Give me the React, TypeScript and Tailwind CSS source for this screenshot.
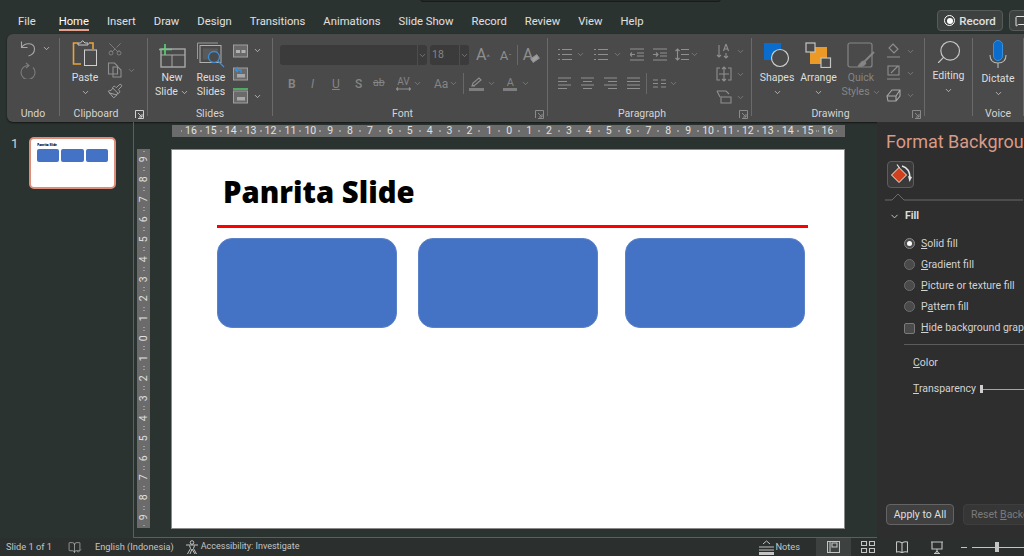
import type { ReactNode } from 'react';
import { ChevronDown, Search, Scissors, Paintbrush, MessageSquare, BookOpen, Check } from 'lucide-react';

const tabs = ['File', 'Home', 'Insert', 'Draw', 'Design', 'Transitions', 'Animations', 'Slide Show', 'Record', 'Review', 'View', 'Help'];
const rulerNumbers = [16, 15, 14, 13, 12, 11, 10, 9, 8, 7, 6, 5, 4, 3, 2, 1, 0, 1, 2, 3, 4, 5, 6, 7, 8, 9, 10, 11, 12, 13, 14, 15, 16];
const sideNumbers = [9, 8, 7, 6, 5, 4, 3, 2, 1, 0, 1, 2, 3, 4, 5, 6, 7, 8, 9];

function Chev({ dim = false, className = '' }: { dim?: boolean; className?: string }) {
  return <ChevronDown size={9} strokeWidth={2} className={`shrink-0 ${dim ? 'text-[#858585]' : 'text-[#d0d0d0]'} ${className}`} />;
}

function Launcher({ dim = false }: { dim?: boolean }) {
  return (
    <svg width="9" height="9" viewBox="0 0 9 9" fill="none" stroke={dim ? '#8a8a8a' : '#d0d0d0'} className="absolute right-[3px] bottom-[3px]">
      <path d="M.5 8V.5H8.500V8.500H3M3 3l4 4M7 4v3H4" />
    </svg>
  );
}

function Group({ label, className, launcher, dim, children }: { label: string; className: string; launcher?: boolean; dim?: boolean; children: ReactNode }) {
  return (
    <div className={`relative h-full shrink-0 flex flex-col ${className}`}>
      <div className="flex-1 min-h-0">{children}</div>
      <div className={`h-[19px] pt-[3px] flex items-center justify-center text-[10.5px] text-[#d4d4d4] ${launcher ? 'pr-[15px]' : ''}`}>{label}</div>
      {launcher && <Launcher dim={dim} />}
    </div>
  );
}

function Sep() {
  return <div className="w-px h-[78px] mt-[4px] bg-[#6a6a6a] shrink-0" />;
}

function Big({ icon, lines, dim, className = '', chevInline, chevBelow }: { icon: ReactNode; lines: string[]; dim?: boolean; className?: string; chevInline?: boolean; chevBelow?: boolean }) {
  return (
    <div className={`flex flex-col items-center text-[10.5px] leading-[14px] ${dim ? 'text-[#858585]' : 'text-[#dedede]'} ${className}`}>
      <div className="h-[28px] flex items-end justify-center">{icon}</div>
      <div className="mt-[3px] flex flex-col items-center whitespace-nowrap">
        {lines.map((l, i) => (
          <div key={l} className="flex items-center gap-[2px]">
            {l}
            {chevInline && i === lines.length - 1 && <Chev dim={dim} />}
          </div>
        ))}
        {chevBelow && <Chev dim={dim} className="mt-[3px]" />}
      </div>
    </div>
  );
}

function Line({ d, w = 16, h = 16, c = '#8f8f8f' }: { d: string; w?: number; h?: number; c?: string }) {
  return (
    <svg width={w} height={h} viewBox={`0 0 ${w} ${h}`} fill="none" stroke={c} strokeWidth="1.1" className="shrink-0">
      <path d={d} />
    </svg>
  );
}

function PasteIcon() {
  return (
    <svg width="26" height="28" viewBox="0 0 26 28" fill="none">
      <path d="M6 3H1.500v21H9" stroke="#e8a33d" strokeWidth="1.6" />
      <path d="M17 3h4v6" stroke="#e8a33d" strokeWidth="1.6" />
      <path d="M6 5V3h2.500l2-2.300 2.500 2.300h3v2z" stroke="#c9c9c9" />
      <rect x="12.500" y="10" width="12" height="15.500" fill="#4a4a4a" stroke="#cfcfcf" />
    </svg>
  );
}

function NewSlideIcon() {
  return (
    <svg width="28" height="24" viewBox="0 0 28 24" fill="none">
      <rect x="3" y="5" width="24" height="18" stroke="#a8a8a8" strokeWidth="1.4" />
      <path d="M3 11h24M14 11v12" stroke="#a8a8a8" />
      <path d="M7 0v11M1 5.500h13" stroke="#5fd07a" strokeWidth="1.6" />
    </svg>
  );
}

function ReuseIcon() {
  return (
    <svg width="28" height="26" viewBox="0 0 28 26" fill="none">
      <path d="M0.500 17V1H21" stroke="#999" />
      <rect x="3" y="3.500" width="21" height="17" fill="#4a4a4a" stroke="#b0b0b0" />
      <rect x="6" y="6.500" width="15" height="11" fill="#5a5a5a" />
      <circle cx="17" cy="15" r="5.500" fill="#4a4a4a" stroke="#3b8fd8" strokeWidth="1.3" />
      <path d="M21 19l6 6" stroke="#3b8fd8" strokeWidth="1.3" />
    </svg>
  );
}

function SlideSmall({ kind }: { kind: 'layout' | 'reset' | 'section' }) {
  return (
    <svg width="16" height="16" viewBox="0 0 16 16" fill="none" className="shrink-0">
      {kind === 'section' && <path d="M0 1h15" stroke="#53c26b" strokeWidth="1.6" />}
      <rect x=".5" y="3" width="14" height="12" fill="#6a6a6a" stroke="#a0a0a0" />
      {kind === 'layout' && <path d="M3 8h4v3H3zM8.500 8h4v3h-4z" fill="#b0b0b0" />}
      {kind === 'reset' && <path d="M2 5l3-3M2 5l3 2M2 5h6v3" stroke="#3b8fd8" strokeWidth="1.3" />}
      {kind !== 'layout' && <rect x="4" y="9" width="8" height="3.500" fill="#a8a8a8" />}
    </svg>
  );
}

function ShapesIcon() {
  return (
    <svg width="26" height="26" viewBox="0 0 26 26" fill="none">
      <rect x="0" y="1" width="17" height="17" fill="#0a6ccd" />
      <circle cx="16" cy="16" r="8.500" fill="#4a4a4a" stroke="#cfcfcf" strokeWidth="1.2" />
    </svg>
  );
}

function ArrangeIcon() {
  return (
    <svg width="27" height="26" viewBox="0 0 27 26" fill="none">
      <rect x="5" y="5" width="17" height="17" fill="#eb9a26" />
      <rect x="1" y="1" width="9" height="9" fill="#4a4a4a" stroke="#c4c4c4" strokeWidth="1.2" />
      <rect x="16" y="16" width="9.500" height="9.500" fill="#4a4a4a" stroke="#c4c4c4" strokeWidth="1.2" />
    </svg>
  );
}

function QuickIcon() {
  return (
    <svg width="28" height="26" viewBox="0 0 28 26" fill="none" stroke="#858585">
      <rect x="1" y="1" width="24" height="24" rx="2" strokeWidth="1.2" />
      <path d="M27 10L17 20" strokeWidth="2" />
      <path d="M17 19c-3 0-4 3-6 5 3 1 7 0 8-3z" fill="#858585" />
    </svg>
  );
}

function MicIcon() {
  return (
    <svg width="18" height="29" viewBox="0 0 18 29" fill="none">
      <rect x="4.500" y="0.500" width="9" height="20" rx="4.500" fill="#0a6ccd" stroke="#3b8fd8" />
      <path d="M1 15c0 5 3 8 8 8s8-3 8-8M9 23v5" stroke="#b8b8b8" strokeWidth="1.1" />
    </svg>
  );
}

function PaintIcon() {
  return (
    <svg width="24" height="24" viewBox="0 0 24 24" fill="none">
      <path d="M8 1.500l2.500 3.500" stroke="#e6e6e6" strokeWidth="1.2" />
      <path d="M10 4.500l7.500 7.500-7.500 7.500L2.500 12z" fill="#cf401c" stroke="#f0f0f0" strokeWidth="1" />
      <path d="M13 3c5 1.500 8 6 8 12" stroke="#e6e6e6" strokeWidth="1.6" />
      <path d="M19 13l1.500 6 2.500-5z" fill="#e6e6e6" />
    </svg>
  );
}

function RulerTop() {
  return (
    <div className="h-[12px] w-[673px] ml-[38px] bg-[#6b6b6b] flex pl-[9px] text-[#e0e0e0] text-[10.5px] leading-none items-center overflow-hidden">
      {rulerNumbers.map((n, i) => (
        <div key={i} className="w-[19.9px] shrink-0 flex items-center justify-between">
          <span className="w-px h-[2px] bg-[#9d9d9d]" />
          <span>{n}</span>
          <span className="w-px h-[2px] bg-[#9d9d9d]" />
        </div>
      ))}
    </div>
  );
}

function RulerSide() {
  return (
    <div className="w-[13px] h-[379px] bg-[#6b6b6b] text-[#e0e0e0] text-[10.5px] leading-none flex flex-col items-center shrink-0 pt-[0.500px]">
      {sideNumbers.map((n, i) => (
        <div key={i} className="h-[19.9px] w-full shrink-0 flex flex-col items-center justify-between py-[1px]">
          <span className="h-px w-[2px] bg-[#9d9d9d]" />
          <span className="-rotate-90">{n}</span>
          <span className="h-px w-[2px] bg-[#9d9d9d]" />
        </div>
      ))}
    </div>
  );
}

function Option({ checked, children }: { checked?: boolean; children: ReactNode }) {
  return (
    <div className="h-[21px] flex items-center gap-[6px] text-[10.5px] text-[#d2d2d2] whitespace-nowrap">
      <span className={`w-[11px] h-[11px] rounded-full border flex items-center justify-center shrink-0 ${checked ? 'border-[#8a8a8a] bg-[#4c4c4c]' : 'border-[#6d6d6d] bg-[#4a4a4a]'}`}>
        {checked && <span className="w-[5px] h-[5px] rounded-full bg-white" />}
      </span>
      <span>{children}</span>
    </div>
  );
}

export default function App() {
  return (
    <div className="relative w-[1024px] h-[556px] overflow-hidden flex flex-col bg-[#2b3330] font-['Roboto',sans-serif] text-[#dedede]">
      <div className="absolute left-[420px] top-[-6px] w-[301px] h-[8px] rounded-[3px] bg-[#232826] border border-[#1a1a1a]" />

      {/* tabs */}
      <div className="h-[34px] shrink-0 flex items-start pl-[18px] pt-[14px] relative text-[11.25px] leading-[16px] text-[#e0e0e0]">
        <div className="flex gap-[18px]">
          {tabs.map((t) => (
            <div key={t} className={`relative ${t === 'Home' ? 'ml-[5px] text-white' : ''}`}>
              {t}
              {t === 'Home' && <span className="absolute left-0 right-0 top-[15px] h-[2px] bg-[#e8a08c]" />}
            </div>
          ))}
        </div>
        <div className="absolute left-[937px] top-[10px] w-[66px] h-[21px] rounded-[4px] border border-[#565a58] bg-[#3d4240] flex items-center justify-center gap-[4px] text-[11.5px] font-medium">
          <span className="w-[11px] h-[11px] rounded-full border border-white flex items-center justify-center">
            <span className="w-[6px] h-[6px] rounded-full bg-white" />
          </span>
          Record
        </div>
        <div className="absolute left-[1009px] top-[10px] w-[30px] h-[21px] rounded-[4px] border border-[#565a58] bg-[#3d4240] flex items-center pl-[5px]">
          <MessageSquare size={12} />
        </div>
      </div>

      {/* ribbon */}
      <div className="h-[88px] shrink-0 ml-[7px] rounded-l-[6px] bg-[#4a4a4a] flex shadow-[0_1px_2px_rgba(0,0,0,0.6)]">
        <Group label="Undo" className="w-[52px]">
          <div className="pl-[13px] pt-[6px] flex flex-col gap-[5px]">
            <div className="flex items-center gap-[6px]">
              <Line w={16} h={17} c="#a8a8a8" d="M1.500 1.500v6h6M1.500 7.500C5 2 14.500 2.500 14.500 9c0 3.500-2.500 6-6 7" />
              <Chev />
            </div>
            <Line w={16} h={17} c="#7d7d7d" d="M6 1l3 2.500L6 6M8.500 3.500A7 7 0 1 0 15 10a6.500 6.500 0 0 0-2-4.500" />
          </div>
        </Group>
        <Sep />
        <Group label="Clipboard" className="w-[87px]" launcher>
          <div className="flex pl-[12px] pt-[6px]">
            <Big icon={<PasteIcon />} lines={['Paste']} chevBelow className="w-[26px]" />
            <div className="ml-[9px] flex flex-col gap-[5px] pt-[1px]">
              <Scissors size={16} strokeWidth={1.1} className="text-[#8f8f8f] -rotate-90" />
              <div className="flex items-center gap-[4px]">
                <Line d="M1.500 1h6l3 3v8h-9zM6 5h5l3 3v7H6z" />
                <Chev dim />
              </div>
              <Paintbrush size={16} strokeWidth={1.2} className="text-[#b5b5b5]" />
            </div>
          </div>
        </Group>
        <Sep />
        <Group label="Slides" className="w-[124px]">
          <div className="flex pl-[5px] pt-[6px]">
            <Big icon={<NewSlideIcon />} lines={['New', 'Slide']} chevInline className="w-[38px]" />
            <Big icon={<ReuseIcon />} lines={['Reuse', 'Slides']} className="w-[38px] ml-[1px]" />
            <div className="ml-[3px] flex flex-col gap-[7px] pt-[2px]">
              <div className="flex items-center gap-[4px]">
                <SlideSmall kind="layout" />
                <Chev />
              </div>
              <SlideSmall kind="reset" />
              <div className="flex items-center gap-[4px]">
                <SlideSmall kind="section" />
                <Chev />
              </div>
            </div>
          </div>
        </Group>
        <Sep />
        <Group label="Font" className="w-[274px]" launcher dim>
          <div className="pl-[7px] pt-[11px] flex flex-col">
            <div className="h-[20px] flex items-center">
              <div className="w-[147px] h-[20px] rounded-[3px] bg-[#3b3b3b] flex justify-end items-center">
                <div className="w-[10px] h-full border-l border-[#4d4d4d] flex items-center justify-center">
                  <Chev dim />
                </div>
              </div>
              <div className="ml-[3px] w-[39px] h-[20px] rounded-[3px] bg-[#3b3b3b] flex items-center text-[10.5px] text-[#858585] pl-[2px]">
                <span className="flex-1">18</span>
                <div className="w-[10px] h-full border-l border-[#4d4d4d] flex items-center justify-center">
                  <Chev dim />
                </div>
              </div>
              <div className="ml-[7px] flex items-baseline text-[#8f8f8f] leading-none">
                <span className="text-[16px]">A</span><span className="text-[8px]">^</span>
                <span className="text-[13px] ml-[10px]">A</span><span className="text-[8px]">ˇ</span>
              </div>
              <div className="ml-[5px] w-px h-[20px] bg-[#686868]" />
              <span className="ml-[5px] text-[16px] leading-none text-[#8f8f8f]">A</span>
              <span className="w-[8px] h-[5px] rotate-[-35deg] -ml-[2px] mt-[7px] border border-[#8f8f8f] bg-[#a0a0a0]" />
            </div>
            <div className="h-[21px] mt-[8px] flex items-center text-[#858585] text-[12px] leading-none">
              <span className="ml-[8px] w-[12px] font-bold">B</span>
              <span className="ml-[11px] w-[12px] italic">I</span>
              <span className="ml-[9px] w-[12px] underline">U</span>
              <span className="ml-[11px] w-[12px] font-medium">S</span>
              <span className="ml-[6px] w-[16px] line-through text-[10.5px]">ab</span>
              <div className="ml-[7px] flex flex-col items-center w-[15px] text-[10px] leading-[10px]">
                AV
                <Line w={15} h={4} d="M0 2h15M2 .5L.5 2 2 3.500M13 .5L14.500 2 13 3.500" />
              </div>
              <Chev dim className="ml-[2px]" />
              <span className="ml-[12px] text-[12px]">Aa</span>
              <Chev dim className="ml-[1px]" />
              <div className="ml-[5px] w-px h-[21px] bg-[#686868]" />
              <div className="ml-[5px] flex flex-col items-center w-[15px]">
                <Line w={15} h={11} d="M3 9l1-3 6-5 2 2-6 5zM3 9h3" />
                <span className="w-[15px] h-[3px] bg-[#7e7e7e]" />
              </div>
              <Chev dim className="ml-[3px]" />
              <div className="ml-[7px] flex flex-col items-center w-[14px] text-[11px] leading-[11px]">
                A
                <span className="w-[14px] h-[3px] bg-[#7e7e7e]" />
              </div>
              <Chev dim className="ml-[4px]" />
            </div>
          </div>
        </Group>
        <Sep />
        <Group label="Paragraph" className="w-[203px]" launcher dim>
          <div className="flex pl-[10px] pt-[14px]">
            <div className="flex flex-col gap-[16px] w-[149px]">
              <div className="flex items-center">
                <Line w={14} h={13} d="M0 1.500h2M4 1.500h10M0 6.500h2M4 6.500h10M0 11.500h2M4 11.500h10" />
                <Chev dim className="ml-[4px]" />
                <div className="ml-[9px]"><Line w={14} h={13} d="M0 1.500h2M4 1.500h10M0 6.500h2M4 6.500h10M0 11.500h2M4 11.500h10" /></div>
                <Chev dim className="ml-[5px]" />
                <div className="ml-[8px]"><Line w={14} h={13} d="M0 1h14M7 5h7M7 8h7M0 12h14M5 6.500H0M2 4.500l-2 2 2 2" /></div>
                <div className="ml-[9px]"><Line w={14} h={13} d="M0 1h14M7 5h7M7 8h7M0 12h14M0 6.500h5M3 4.500l2 2-2 2" /></div>
                <div className="ml-[8px]"><Line w={14} h={13} d="M6 1.500h8M6 6.500h8M6 11.500h8M2.500 1v11M.5 3l2-2 2 2M.5 10l2 2 2-2" /></div>
                <Chev dim className="ml-[1px]" />
              </div>
              <div className="flex items-center">
                <Line w={14} h={13} d="M0 1h13M0 4.500h9M0 8h13M0 11.500h9" />
                <div className="ml-[9px]"><Line w={14} h={13} d="M0 1h13M2 4.500h9M0 8h13M2 11.500h9" /></div>
                <div className="ml-[9px]"><Line w={14} h={13} d="M0 1h13M4 4.500h9M0 8h13M4 11.500h9" /></div>
                <div className="ml-[9px]"><Line w={14} h={13} d="M0 1h13M0 4.500h13M0 8h13M0 11.500h13" /></div>
                <div className="ml-[5px] w-px h-[21px] -my-[4px] bg-[#686868]" />
                <div className="ml-[6px]"><Line w={13} h={13} d="M0 3h5M0 6.500h5M0 10h5M8 3h5M8 6.500h5M8 10h5" /></div>
                <Chev dim className="ml-[3px]" />
              </div>
            </div>
            <div className="ml-[9px] flex flex-col gap-[7px] -mt-[5px]">
              <div className="flex items-center gap-[4px]">
                <Line d="M3 2v12M1 12l2 2 2-2M10 1L7.500 8M10 1l2.500 7M8 6h4M10 10v5M8 13l2 2 2-2" />
                <Chev dim />
              </div>
              <div className="flex items-center gap-[4px]">
                <Line d="M4 2H1v12h3M12 2h3v12h-3M8 1v14M3 8h10M6 3l2-2 2 2M6 13l2 2 2-2" />
                <Chev dim />
              </div>
              <div className="flex items-center gap-[4px]">
                <Line d="M1 2h9l3 3M5 8h10v6H5zM1 2l3 6" />
                <Chev dim />
              </div>
            </div>
          </div>
        </Group>
        <Sep />
        <Group label="Drawing" className="w-[172px]" launcher dim>
          <div className="flex pl-[12px] pt-[6px]">
            <Big icon={<ShapesIcon />} lines={['Shapes']} chevBelow className="w-[26px]" />
            <Big icon={<ArrangeIcon />} lines={['Arrange']} chevBelow className="w-[27px] ml-[15px]" />
            <Big icon={<QuickIcon />} lines={['Quick', 'Styles']} chevInline dim className="w-[28px] ml-[15px]" />
            <div className="ml-[11px] flex flex-col gap-[6px] pt-[3px]">
              <div className="flex items-center gap-[4px]">
                <Line d="M7 1l5 5-4 4-5-5zM1 14h13" />
                <Chev dim />
              </div>
              <div className="flex items-center gap-[4px]">
                <Line d="M2 1h11v9H2zM5 8l7-7M1 14h13" />
                <Chev dim />
              </div>
              <div className="flex items-center gap-[4px]">
                <Line d="M1 9l5-6h8v6l-4 5H2zM1 9h9l4-6M10 9v5" c="#a8a8a8" />
                <Chev dim />
              </div>
            </div>
          </div>
        </Group>
        <Sep />
        <Group label="" className="w-[47px]">
          <Big icon={<Search size={28} strokeWidth={1} className="-scale-x-100 text-[#c8c8c8]" />} lines={['Editing']} chevBelow className="pt-[4px] w-full" />
        </Group>
        <Sep />
        <Group label="Voice" className="w-[50px]">
          <Big icon={<MicIcon />} lines={['Dictate']} chevBelow className="pt-[7px] w-full" />
        </Group>
        <Sep />
      </div>

      {/* middle */}
      <div className="flex-1 min-h-0 flex">
        <div className="w-[134px] shrink-0 border-r border-[#5b5f5d] flex pt-[15px] pl-[11px] relative">
          <span className="text-[13px] leading-none text-[#d4d4d4]">1</span>
          <div className="ml-[11px] w-[87px] h-[52px] rounded-[5px] border-2 border-[#df8d78] bg-white px-[6px] pt-[4px] shrink-0">
            <div className="text-[3px] leading-[4px] font-black text-black whitespace-nowrap font-['Noto_Sans',sans-serif]">Panrita Slide</div>
            <div className="mt-[2px] flex gap-[2px]">
              <div className="w-[22px] h-[13px] rounded-[2px] bg-[#4472c4]" />
              <div className="w-[23px] h-[13px] rounded-[2px] bg-[#4472c4]" />
              <div className="w-[22px] h-[13px] rounded-[2px] bg-[#4472c4]" />
            </div>
          </div>
        </div>

        <div className="w-[743px] shrink-0 border-b border-[#5b5f5d] flex flex-col pt-[3px]">
          <RulerTop />
          <div className="flex pl-[3px] pt-[12px]">
            <RulerSide />
            <div className="relative ml-[21px] w-[674px] h-[380px] bg-white border border-[#8a8a8a]">
              <div className="absolute left-[51px] top-[22px] text-[29.25px] leading-[40px] font-black text-black whitespace-nowrap font-['Noto_Sans',sans-serif]">Panrita Slide</div>
              <div className="absolute left-[45px] top-[75px] w-[591px] h-[3px] bg-[#ff0000]" />
              <div className="absolute left-[45px] top-[88px] w-[180px] h-[90px] rounded-[15px] bg-[#4472c4] border border-[#5a82c8]" />
              <div className="absolute left-[246px] top-[88px] w-[180px] h-[90px] rounded-[15px] bg-[#4472c4] border border-[#5a82c8]" />
              <div className="absolute left-[453px] top-[88px] w-[180px] h-[90px] rounded-[15px] bg-[#4472c4] border border-[#5a82c8]" />
            </div>
          </div>
        </div>

        <div className="w-[147px] shrink-0 bg-[#2e2e2e] overflow-hidden flex flex-col pl-[9px] whitespace-nowrap">
          <div className="h-[39px] pt-[7px] text-[18px] leading-[26px] text-[#d99a86]">Format Background</div>
          <div className="w-[27px] h-[27px] ml-[1px] rounded-[4px] border border-[#5d5d5d] bg-[#3a3a3a] flex items-center justify-center">
            <PaintIcon />
          </div>
          <svg width="138" height="8" viewBox="0 0 138 8" fill="none" stroke="#6a6a6a" className="mt-[5px] shrink-0 -ml-[1px]">
            <path d="M0 7H7L13 1l6 6H138" />
          </svg>
          <div className="mt-[6px] flex items-center gap-[5px] text-[10.5px] font-bold text-[#dcdcdc] h-[18px]">
            <ChevronDown size={11} className="text-[#cfcfcf] ml-[3px]" />
            Fill
          </div>
          <div className="ml-[18px] mt-[8px] flex flex-col">
            <Option checked><u>S</u>olid fill</Option>
            <Option><u>G</u>radient fill</Option>
            <Option><u>P</u>icture or texture fill</Option>
            <Option>P<u>a</u>ttern fill</Option>
            <div className="h-[22px] flex items-center gap-[6px] text-[10.5px] text-[#d2d2d2]">
              <span className="w-[11px] h-[11px] rounded-[2px] border border-[#7a7a7a] bg-[#4a4a4a] shrink-0" />
              <span><u>H</u>ide background graphics</span>
            </div>
          </div>
          <div className="ml-[18px] mt-[5px] h-px bg-[#5c5c5c]" />
          <div className="ml-[27px] mt-[8px] text-[10.5px] leading-[20px] text-[#d2d2d2]"><u>C</u>olor</div>
          <div className="ml-[27px] mt-[6px] flex items-center text-[10.5px] leading-[20px] text-[#d2d2d2]">
            <span><u>T</u>ransparency</span>
            <span className="ml-[4px] w-[3px] h-[8px] bg-[#cfcfcf] shrink-0" />
            <span className="w-[60px] h-px bg-[#a5a5a5]" />
          </div>
          <div className="mt-auto mb-[13px] flex gap-[9px] text-[10.5px]">
            <div className="w-[68px] h-[21px] shrink-0 rounded-[4px] border border-[#646464] bg-[#404040] flex items-center justify-center text-[#dedede]">Apply to All</div>
            <div className="w-[100px] h-[21px] shrink-0 rounded-[4px] border border-[#3e3e3e] bg-[#363636] pl-[7px] flex items-center text-[#7b7b7b]"><span>Reset <u>B</u>ackground</span></div>
          </div>
        </div>
      </div>

      {/* status bar */}
      <div className="h-[18px] shrink-0 flex items-center bg-[#2b2f2d] text-[9.25px] text-[#c4c4c4] whitespace-nowrap relative">
        <span className="ml-[6px]">Slide 1 of 1</span>
        <BookOpen size={13} strokeWidth={1.2} className="ml-[16px]" />
        <Check size={6} strokeWidth={2} className="-ml-[5px] mt-[8px]" />
        <span className="ml-[13px]">English (Indonesia)</span>
        <svg width="15" height="15" viewBox="0 0 15 15" fill="none" stroke="#c4c4c4" className="ml-[11px] shrink-0">
          <circle cx="7" cy="2.500" r="1.800" />
          <path d="M1 5h12M4.500 5.500l1 3-3 5.500M9.500 5.500l-1 3 3 5.500M7 9l-2 5M7 9l3 5" />
        </svg>
        <span className="ml-[1px] text-[9px]">Accessibility: Investigate</span>
        <div className="ml-auto flex items-center h-full">
          <svg width="15" height="15" viewBox="0 0 15 15" fill="none" stroke="#c4c4c4" className="shrink-0 mr-[1px]">
            <path d="M4 4l3.500-3L11 4M0 7h15M0 10h15" />
            <path d="M0 13.500h15" strokeWidth="3" />
          </svg>
          <span>Notes</span>
          <div className="ml-[16px] w-[35px] h-full bg-[#3d4240] flex items-center justify-center">
            <Line w={13} h={12} c="#c4c4c4" d="M.5.500h12v11H.5zM3 .5v11M5 2h5v4H5z" />
          </div>
          <div className="ml-[10px]"><Line w={14} h={12} c="#c4c4c4" d="M.5.500h5v4h-5zM8.500.500h5v4h-5zM.5 7.500h5v4h-5zM8.500 7.500h5v4h-5z" /></div>
          <div className="ml-[21px]"><Line w={12} h={12} c="#c4c4c4" d="M6 2C4 .5 2 .5.5 1v10c2-.5 4-.5 5.500 1 1.500-1.500 3.500-1.500 5.500-1V1C10 .5 8 .5 6 2zM6 2v10" /></div>
          <div className="ml-[23px]"><Line w={12} h={13} c="#c4c4c4" d="M0 1h12M1 1v7h10V1M6 8v2M3 12.500h6M6 10l-2 2.500M6 10l2 2.500" /></div>
          <div className="ml-[18px] flex items-center w-[63px] shrink-0">
            <span className="w-[6px] h-px bg-[#c4c4c4]" />
            <span className="ml-[5px] w-[23px] h-px bg-[#c4c4c4]" />
            <span className="w-[4px] h-[10px] bg-[#c4c4c4]" />
            <span className="flex-1 h-px bg-[#c4c4c4]" />
          </div>
        </div>
      </div>
    </div>
  );
}
